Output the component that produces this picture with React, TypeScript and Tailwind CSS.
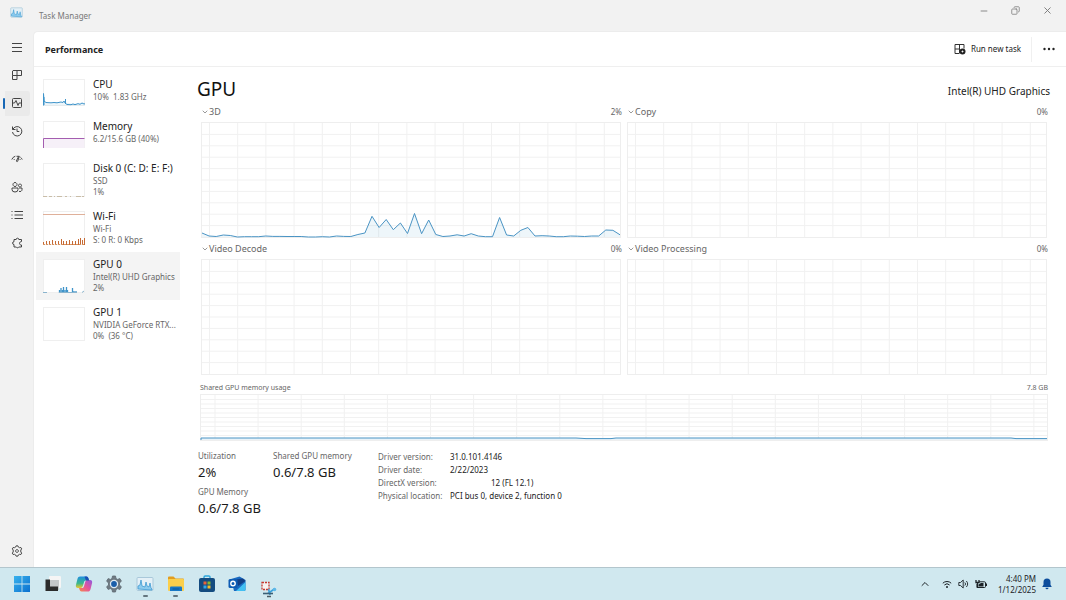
import React from "react";
import { ChevronDown, ChevronUp, Copy, Minus, X } from "lucide-react";

/* ---------- data ---------- */

const gpu3d = [
    4, 1, 0.5, 2, 1.5, 0, 0.3, 0.3, 0.3, 1, 0.6, 0.6, 0.5, 0.5, 0.5, 0, 0, 0.3, 0, 1,
    0.6, 0.5, 2.5, 4, 20.7, 9.5, 17.5, 7.3, 14, 3.5, 23.5, 3.3, 17, 2.5, 0.5, 1, 2.2, 1, 3.3, 1,
    0.3, 0.3, 19.5, 2, 1, 6.7, 9.5, 1, 1.3, 1, 0.3, 0.3, 1, 0.8, 0.5, 1, 1, 7, 6.7, 2.2,
];

const panels = [
    { name: "3D", value: "2%", data: gpu3d },
    { name: "Copy", value: "0%" },
    { name: "Video Decode", value: "0%" },
    { name: "Video Processing", value: "0%" },
];

const details = [
    { label: "Driver version:", value: "31.0.101.4146" },
    { label: "Driver date:", value: "2/22/2023" },
    { label: "DirectX version:", value: "12 (FL 12.1)", indent: true },
    { label: "Physical location:", value: "PCI bus 0, device 2, function 0" },
];

/* ---------- charts ---------- */

type GridProps = { w: number; h: number; step: number; offset: number; children?: React.ReactNode; className: string };

const GridChart = ({ w, h, step, offset, children, className }: GridProps) => {
    const cols: number[] = [];
    for (let x = offset; x < w; x += step) cols.push(x);
    const rows = [1, 2, 3, 4, 5, 6, 7, 8, 9].map((n) => (n * h) / 10);

    return (
        <div className={`border border-[#eeeeee] ${className}`}>
            <svg className="block h-full w-full overflow-visible" viewBox={`0 0 ${w} ${h}`} preserveAspectRatio="none" aria-hidden="true">
                <g stroke="#f1f1f1" strokeWidth="1">
                    {cols.map((x) => <line key={x} x1={x} x2={x} y1="0" y2={h} vectorEffect="non-scaling-stroke" />)}
                    {rows.map((y) => <line key={y} x1="0" x2={w} y1={y} y2={y} vectorEffect="non-scaling-stroke" />)}
                </g>
                {children}
            </svg>
        </div>
    );
};

const Panel = ({ name, value, data }: { name: string; value: string; data?: number[] }) => {
    const points = data?.map((v, i) => `${((i * 418) / 59).toFixed(1)},${(114 - v).toFixed(1)}`).join(" ");

    return (
        <section>
            <div className="flex h-[20px] items-center justify-between">
                <button className="flex items-center text-[9px] text-[#666]">
                    <ChevronDown size={8} />
                    {name}
                </button>
                <span className="-mr-px text-[8px] text-[#666]">{value}</span>
            </div>
            <GridChart w={418} h={114} step={28.2} offset={7.5} className="h-[116px]">
                {points && (
                    <>
                        <polygon points={`0,114 ${points} 418,114`} fill="#117dbb" fillOpacity="0.07" />
                        <polyline points={points} fill="none" stroke="#4a94c4" vectorEffect="non-scaling-stroke" />
                    </>
                )}
            </GridChart>
        </section>
    );
};

/* ---------- resource list ---------- */

const CpuThumb = () => (
    <>
        <path d="M.5 14.500V23l4 .5 6 0 6-.5 4 0 2 .5 6 1 5-.5 8-.5V26.500H.5Z" fill="#117dbb" fillOpacity=".08" />
        <path d="M.5 26.500V14.500l.5 7.500 2 1.500 5 .3 3-.3 3 .3 4-.8 2 .5 1-1.500 1 2 2 1.500 4 .2 2-.7 2 .7 3-1 2 .6 2-1.300 2 1 2-.5" fill="none" stroke="#3f94ca" />
        <path d="M22.500 20v5M1 18v8" stroke="#3f94ca" />
    </>
);

const MemThumb = () => (
    <>
        <path d="M.5 17.500h41V27H.5Z" fill="#f6f0f8" />
        <path d="M.5 27v-9.500h41" fill="none" stroke="#a45db0" />
    </>
);

const DiskThumb = () => (
    <path d="M0 33.500h4m2 0h3m2 0h1m2 0h5m3 0h2m3 0h1m5 0h5m1 0h2" stroke="#c9bda8" strokeWidth="1" fill="none" />
);

const WifiThumb = () => (
    <>
        <path d="M0 3.500h42" stroke="#dfb09a" />
        <path
            d="M.5 34v-3M3.500 34v-4M6.500 34v-4M9.500 34v-5M12.500 34v-4M15.500 34v-4M18.500 34v-6M20.500 34v-4M23.500 34v-4M26.500 34v-5M29.500 34v-4M32.500 34v-4M35.500 34v-6M37.500 34v-7M39.500 34v-5M41.500 34v-7"
            stroke="#c66a35"
        />
        <path d="M0 33.500h42" stroke="#d9935f" strokeDasharray="2 1" />
    </>
);

const GpuThumb = () => (
    <>
        <path d="M16.500 34v-3M18 34v-5M19.500 34v-3M20.500 34v-6M22 34v-3M23.500 34v-6M24.500 34v-3M29.500 34v-5M31 34v-2M33 34v-2" stroke="#3f94ca" strokeWidth="1.300" />
        <path d="M16 33.500h18M0 33.500h4m35 0 2-1.500" stroke="#8ab4cd" fill="none" />
    </>
);

const resources = [
    { name: "CPU", lines: ["10%  1.83 GHz"], thumb: <CpuThumb /> },
    { name: "Memory", lines: ["6.2/15.6 GB (40%)"], thumb: <MemThumb /> },
    { name: "Disk 0 (C: D: E: F:)", lines: ["SSD", "1%"], thumb: <DiskThumb /> },
    { name: "Wi-Fi", lines: ["Wi-Fi", "S: 0 R: 0 Kbps"], thumb: <WifiThumb /> },
    { name: "GPU 0", lines: ["Intel(R) UHD Graphics", "2%"], thumb: <GpuThumb />, active: true },
    { name: "GPU 1", lines: ["NVIDIA GeForce RTX...", "0%  (36 °C)"], thumb: null },
];

const ResourceList = () => (
    <div className="flex w-[146px] shrink-0 flex-col pt-[5px] pl-[2px]">
        {resources.map((r) => {
            const h = r.lines.length > 1 ? 34 : 27;
            return (
                <button
                    key={r.name}
                    className={`flex gap-[8px] pl-[7px] text-left ${r.lines.length > 1 ? "h-[48px]" : "h-[42px]"} ${r.active ? "bg-[#f4f4f4]" : ""}`}
                >
                    <svg width="42" height={h} viewBox={`0 0 42 ${h}`} className="mt-[7px] shrink-0" aria-hidden="true">
                        <rect x=".5" y=".5" width="41" height={h - 1} fill="#fff" stroke="#efefef" />
                        {r.thumb}
                    </svg>
                    <span className="min-w-0 pt-[5px]">
                        <span className="block text-[10px] leading-[14px] whitespace-nowrap text-[#222]">{r.name}</span>
                        {r.lines.map((l) => (
                            <span key={l} className="block text-[8px] leading-[11px] whitespace-pre text-[#666]">{l}</span>
                        ))}
                    </span>
                </button>
            );
        })}
    </div>
);

/* ---------- left rail ---------- */

const navItems = [
    { label: "Open navigation", d: "M1 2.500h10M1 6.500h10M1 10.500h10" },
    { label: "Processes", d: "M2 1.500h8.500v5H1.500V2ZM6 1.500v5M1.500 6.500v4H6v-4" },
    { label: "Performance", d: "M2.500 1.500h7a1 1 0 0 1 1 1v7a1 1 0 0 1-1 1h-7a1 1 0 0 1-1-1v-7a1 1 0 0 1 1-1ZM2 6h1.500l1.500-2.500 2 5L8 6h2", active: true },
    { label: "App history", d: "M1.500 1.500v3h3M1.800 4.500A4.700 4.700 0 1 1 1.500 7M6 3.500v3h2.300" },
    { label: "Startup apps", d: "M.8 6.500a5.500 5.500 0 0 1 3.500-3.300M11.200 6.500a5.500 5.500 0 0 0-1.800-2.300M5.500 3.300h2.800L6.700 8.300a.7.7 0 0 1-1.300-.4L7.600 3.500M2.800 7l.7-.9M8.700 6l.7.900" },
    { label: "Users", d: "M4 1.500a2 2 0 1 0 .01 0M9 3a1.500 1.500 0 1 0 .01 0M1 7h6v1.500a3 2.500 0 0 1-6 0ZM8 7h3v1.500a2 2 0 0 1-3 1.800" },
    { label: "Details", d: "M3.500 2.500H12M3.500 6H12M3.500 9.500H12M.5 2.500h1M.5 6h1M.5 9.500h1" },
    { label: "Services", d: "M10.500 4.500V2.500H7.800a1.300 1.300 0 0 0-2.600 0H3v2.200a1.400 1.400 0 0 0 0 2.800v2.500h2.300a1.300 1.300 0 0 0 2.400 0h2.800V8H9.800a1.700 1.700 0 0 1 0-3.300Z" },
];

const RailIcon = ({ d }: { d: string }) => (
    <svg width="12" height="12" viewBox="0 0 12 12" fill="none" stroke="#444" strokeWidth="1" strokeLinejoin="round" aria-hidden="true">
        <path d={d} />
    </svg>
);

const Rail = () => (
    <nav className="flex w-[33px] shrink-0 flex-col pt-[2px] pb-[2px]">
        {navItems.map((item) => (
            <div key={item.label} className="flex h-[28px] items-center">
                <span className={`ml-[3px] h-[11px] w-[2px] rounded ${item.active ? "bg-[#1767b5]" : ""}`} />
                <button
                    aria-label={item.label}
                    className={`flex h-[25px] w-[25px] items-center justify-center rounded-r-[3px] pr-px ${item.active ? "bg-[#eaeaea]" : ""}`}
                >
                    <RailIcon d={item.d} />
                </button>
            </div>
        ))}
        <button aria-label="Settings" className="mt-auto flex h-[28px] items-center justify-center">
            <RailIcon d="M4.700 2 5.200.8h1.600L7.300 2l1.200.7 1.400-.2.8 1.400-.9 1.100v2l.9 1.100-.8 1.400-1.400-.2-1.200.7-.5 1.200H5.200L4.700 10l-1.200-.7-1.400.2-.8-1.400.9-1.100V5l-.9-1.100.8-1.400 1.400.2ZM6 4.600a1.400 1.400 0 1 0 .01 0" />
        </button>
    </nav>
);

/* ---------- task bar ---------- */

const MonitorIcon = ({ size = 18 }: { size?: number }) => (
    <svg width={size} height={size} viewBox="0 0 18 18" aria-hidden="true">
        <rect x="1" y="2.500" width="16" height="13" rx="1" fill="#e4f0f7" stroke="#a9c8da" />
        <path d="M2 14V11l2-1 1-5 1 6 3 1 1-5 1 4 2 1 1-4 1 5 1 1v1Z" fill="#8ccbee" stroke="#3f9bd2" strokeWidth=".8" />
    </svg>
);

const Windows = () => (
    <svg width="18" height="18" viewBox="0 0 18 18" aria-hidden="true">
        <defs>
            <linearGradient id="win" x1="0" y1="0" x2="1" y2="1">
                <stop offset="0" stopColor="#38b2ed" />
                <stop offset="1" stopColor="#0b70cf" />
            </linearGradient>
        </defs>
        <path d="M1 1h7.600v7.600H1ZM9.400 1H17v7.600H9.400ZM1 9.400h7.600V17H1ZM9.400 9.400H17V17H9.400Z" fill="url(#win)" />
    </svg>
);

const TaskView = () => (
    <svg width="18" height="18" viewBox="0 0 18 18" aria-hidden="true">
        <rect x="5" y="1" width="12" height="12" rx="1" fill="#f5f5f5" />
        <rect x="6" y="5" width="9" height="10" fill="#c4c7c9" />
        <path d="M1.500 4.500H6v7h8V16H1.500Z" fill="#2b2b2b" />
    </svg>
);

const Copilot = () => (
    <svg width="18" height="18" viewBox="0 0 18 18" aria-hidden="true">
        <defs>
            <linearGradient id="cp1" x1="0" y1="0" x2="0" y2="1">
                <stop offset="0" stopColor="#1f8fe0" />
                <stop offset=".6" stopColor="#3cb88a" />
                <stop offset="1" stopColor="#f1c52c" />
            </linearGradient>
            <linearGradient id="cp2" x1="1" y1="0" x2="0" y2="1">
                <stop offset="0" stopColor="#8d5be0" />
                <stop offset=".5" stopColor="#e5549b" />
                <stop offset="1" stopColor="#f58a4c" />
            </linearGradient>
        </defs>
        <path d="M5 1.500h6.500c1 0 1.600.8 2 2l.6 2H11c-1.300 0-1.700.8-2 1.800L7.800 11c-.4 1.300-1 2-2.300 2H3C1 13 .5 11.500 1 9.800l1.500-6C3 2.200 3.700 1.500 5 1.500Z" fill="url(#cp1)" />
        <path d="M13 16.500H6.500c-1 0-1.600-.8-2-2L4 13h3c1.300 0 1.700-.8 2-1.800L10.200 7c.4-1.300 1-2 2.300-2H15c2 0 2.500 1.500 2 3.200l-1.500 6c-.5 1.600-1.200 2.300-2.500 2.300Z" fill="url(#cp2)" />
        <path d="M9.500 1.500h2c1 0 1.600.8 2 2l.6 2H11Z" fill="#1b4fb5" />
    </svg>
);

const Gear = () => (
    <svg width="18" height="18" viewBox="0 0 18 18" aria-hidden="true">
        <path
            d="M7 3.500 7.500 1h3l.5 2.500 1.500.9 2.400-.8 1.500 2.600-1.900 1.700v2.200l1.900 1.700-1.500 2.600-2.400-.8-1.500.9-.5 2.500h-3L7 14.500l-1.500-.9-2.400.8-1.500-2.600 1.900-1.700V7.900L1.600 6.200l1.500-2.600 2.400.8Z"
            fill="#6f7a82"
            stroke="#5e6a72"
            strokeWidth=".8"
            strokeLinejoin="round"
        />
        <circle cx="9" cy="9" r="4.200" fill="#dfeaf2" />
        <circle cx="9" cy="9" r="2.900" fill="#1b5ea9" />
    </svg>
);

const Explorer = () => (
    <svg width="18" height="18" viewBox="0 0 18 18" aria-hidden="true">
        <path d="M1 2.500A1 1 0 0 1 2 1.500h4.500l2 2H16a1 1 0 0 1 1 1V7H1Z" fill="#e29d1e" />
        <rect x="1" y="4" width="16" height="12" rx="1" fill="#fbcf4b" />
        <path d="M3 12.500a1 1 0 0 1 1-1h10a1 1 0 0 1 1 1V16H3Z" fill="#1878c6" />
        <path d="M5.500 14h7" stroke="#0d5693" />
    </svg>
);

const Store = () => (
    <svg width="18" height="18" viewBox="0 0 18 18" aria-hidden="true">
        <path d="M6 4V2.200A1.200 1.200 0 0 1 7.200 1h3.600A1.200 1.200 0 0 1 12 2.200V4" fill="none" stroke="#2aa5dd" strokeWidth="1.400" />
        <rect x="1" y="3" width="16" height="14" rx="2" fill="#144c80" />
        <path d="M5.500 6.500h3v3h-3Z" fill="#e8623a" />
        <path d="M9.500 6.500h3v3h-3Z" fill="#86b932" />
        <path d="M5.500 10.500h3v3h-3Z" fill="#32a6e6" />
        <path d="M9.500 10.500h3v3h-3Z" fill="#f5bd28" />
    </svg>
);

const Outlook = () => (
    <svg width="18" height="18" viewBox="0 0 18 18" aria-hidden="true">
        <path d="m3 4 8.500-2.500L17.500 5v9.500A1.500 1.500 0 0 1 16 16H6Z" fill="#1969c0" />
        <path d="m8 4.500 7-1 2.500 2.500-7.500 5Z" fill="#123f86" />
        <path d="M17.500 7 8 16h8a1.500 1.500 0 0 0 1.500-1.500Z" fill="#43c0f2" />
        <rect x=".5" y="4" width="9" height="9" rx="1.500" fill="#0e5cb4" />
        <circle cx="5" cy="8.500" r="2.200" fill="none" stroke="#fff" strokeWidth="1.400" />
    </svg>
);

const Snip = () => (
    <svg width="18" height="18" viewBox="0 0 18 18" className="mt-[11px]" aria-hidden="true">
        <rect x="3" y="1.500" width="7" height="7" fill="#f6f2f1" stroke="#c6392f" strokeWidth="1.300" strokeDasharray="2 1" />
        <path d="m9 12.500 7-5M9.500 8l1.500 6" stroke="#3aa0da" strokeWidth="1.600" />
        <circle cx="15.500" cy="8.500" r="1.800" fill="#5db8e8" />
        <path d="M4 12.500h10" stroke="#3b5f75" strokeWidth="1.600" />
        <path d="M8 15.500h4" stroke="#4b5b63" strokeWidth="1.500" />
    </svg>
);

const apps = [
    { label: "Start", icon: <Windows /> },
    { label: "Task view", icon: <TaskView /> },
    { label: "Copilot", icon: <Copilot /> },
    { label: "Settings app", icon: <Gear /> },
    { label: "Task Manager", icon: <MonitorIcon />, running: true },
    { label: "File Explorer", icon: <Explorer />, running: true },
    { label: "Microsoft Store", icon: <Store /> },
    { label: "Outlook", icon: <Outlook /> },
    { label: "Snipping Tool", icon: <Snip /> },
];

const Taskbar = () => (
    <footer className="flex h-[33px] shrink-0 items-stretch justify-between border-t border-[#b3c6cd] bg-[#d0e8ef] pl-[7px] text-[#1c2327]">
        <div className="flex w-[276px] justify-between">
            {apps.map((app) => (
                <button key={app.label} aria-label={app.label} className="relative flex w-[30px] items-center justify-center">
                    {app.icon}
                    {app.running && <span className="absolute bottom-[3px] h-[2px] w-[5px] rounded bg-[#65767f]" />}
                </button>
            ))}
        </div>
        <div className="flex items-center pr-[14px]">
            <button aria-label="Hidden icons" className="mr-[11px]"><ChevronUp size={12} /></button>
            <button aria-label="Network, sound and battery" className="flex items-center gap-[6px]">
                <svg width="10" height="10" viewBox="0 0 10 10" fill="none" stroke="currentColor" aria-hidden="true">
                    <path d="M.8 4.200a6 6 0 0 1 8.400 0M2.400 6a3.700 3.700 0 0 1 5.200 0" />
                    <circle cx="5" cy="8" r="1" fill="currentColor" stroke="none" />
                </svg>
                <svg width="11" height="10" viewBox="0 0 11 10" fill="none" stroke="currentColor" strokeWidth=".9" aria-hidden="true">
                    <path d="M.8 3.500h1.700L5.200 1v8L2.500 6.500H.8ZM6.800 3.500a2 2 0 0 1 0 3M8.300 2a4 4 0 0 1 0 6" />
                </svg>
                <svg width="12" height="10" viewBox="0 0 12 10" aria-hidden="true">
                    <path d="M4 2.800h5.500a1 1 0 0 1 1 1v3.700a1 1 0 0 1-1 1H2V5" fill="none" stroke="currentColor" />
                    <path d="M3.500 7.500V5.500L6 4h2.500v3.500Z" fill="currentColor" />
                    <path d="M11.500 4.500v2.500" stroke="currentColor" />
                    <path d="M1 1v2.500h3V1M2.500 3.500V9" stroke="currentColor" strokeWidth="1.300" fill="none" />
                </svg>
            </button>
            <button className="ml-[11px] text-right text-[8px] leading-[11px]">
                4:40 PM<br />1/12/2025
            </button>
            <button aria-label="Notifications" className="ml-[6px] text-[#0c4d9c]">
                <svg width="10" height="12" viewBox="0 0 10 12" fill="currentColor" aria-hidden="true">
                    <path d="M5 .5a3.500 3.500 0 0 1 3.500 3.500v2.800L9.800 9H.2l1.300-2.200V4A3.500 3.500 0 0 1 5 .5ZM3.500 9.700h3a1.500 1.500 0 0 1-3 0Z" />
                </svg>
            </button>
        </div>
    </footer>
);

/* ---------- page ---------- */

const Stat = ({ label, value }: { label: string; value: string }) => (
    <div className="h-[36px] whitespace-nowrap">
        <p className="text-[8px] leading-[14px] text-[#666]">{label}</p>
        <p className="text-[13px] leading-[18px] text-[#1a1a1a]">{value}</p>
    </div>
);

const GpuView = () => (
    <main className="min-w-0 flex-1 pr-[18px] pl-[17px]">
        <div className="flex h-[35px] items-center justify-between pt-[8px]">
            <h1 className="text-[19px] leading-[26px] text-[#111]">GPU</h1>
            <p className="-mr-[2px] pt-[5px] text-[10px] leading-[16px] text-[#222]">Intel(R) UHD Graphics</p>
        </div>
        <div className="grid grid-cols-2 gap-x-[6px] gap-y-px pr-px pl-[4px]">
            {panels.map((p) => <Panel key={p.name} {...p} />)}
        </div>
        <div className="mt-[7px] flex h-[12px] items-center justify-between pl-[3px] text-[7px] text-[#666]">
            <span>Shared GPU memory usage</span>
            <span>7.8 GB</span>
        </div>
        <GridChart w={846} h={45} step={43.1} offset={14} className="ml-[3px] h-[47px]">
            <path d="M0 43h846v2H0Z" fill="#e9f3f9" />
            <path d="M0 45v-2h375l10 .6h25l5-.6h395l5 .6h31" fill="none" stroke="#4a94c4" vectorEffect="non-scaling-stroke" />
        </GridChart>
        <div className="mt-[8px] flex pl-px">
            <div className="w-[75px]">
                <Stat label="Utilization" value="2%" />
                <Stat label="GPU Memory" value="0.6/7.8 GB" />
            </div>
            <div className="w-[105px]">
                <Stat label="Shared GPU memory" value="0.6/7.8 GB" />
            </div>
            <table className="mt-px self-start text-left text-[8px]">
                <tbody>
                    {details.map((d) => (
                        <tr key={d.label} className="h-[13px] leading-[13px] whitespace-nowrap">
                            <th scope="row" className="w-[72px] p-0 font-normal text-[#666]">{d.label}</th>
                            <td className={`py-0 text-[#222] ${d.indent ? "pl-[41px]" : "pl-0"}`}>{d.value}</td>
                        </tr>
                    ))}
                </tbody>
            </table>
        </div>
    </main>
);

const App = () => {
    return (
        <div className="flex h-screen flex-col overflow-hidden bg-[#f2f2f2] font-['Noto_Sans','Open_Sans',sans-serif]">
            <header className="flex h-[31px] shrink-0 items-start justify-between text-[#777]">
                <div className="flex pl-[10px]">
                    <span className="mt-[6px]"><MonitorIcon size={13} /></span>
                    <span className="mt-[10px] ml-[16px] text-[8px] leading-[12px]">Task Manager</span>
                </div>
                <div className="flex gap-[22px] pt-[5px] pr-[13px]">
                    <button aria-label="Minimize"><Minus size={10} /></button>
                    <button aria-label="Restore"><Copy size={9} className="-scale-x-100" /></button>
                    <button aria-label="Close"><X size={11} /></button>
                </div>
            </header>
            <div className="flex min-h-0 flex-1">
                <Rail />
                <div className="flex min-w-0 flex-1 flex-col rounded-tl-[5px] border-t border-l border-[#ececec] bg-white">
                    <div className="flex h-[35px] shrink-0 items-center justify-between border-b border-[#efefef] pr-[11px] pl-[11px]">
                        <h2 className="pt-px text-[9px] font-bold text-[#222]">Performance</h2>
                        <div className="flex h-full items-center">
                            <button className="flex items-center gap-[5px] pr-[10px] text-[8px] text-[#222]">
                                <svg width="12" height="12" viewBox="0 0 12 12" fill="none" stroke="#333" aria-hidden="true">
                                    <path d="M1 1.500h9v4M1 1.500v9h4M1 6h5M5.500 1.500v9" />
                                    <circle cx="8.500" cy="8.500" r="3" fill="#222" stroke="none" />
                                    <path d="M7.500 8.500h2M8.500 7.500v2" stroke="#fff" strokeWidth=".8" />
                                </svg>
                                Run new task
                            </button>
                            <button aria-label="More options" className="flex h-[25px] items-center border-l border-[#f0f0f0] pl-[11px]">
                                <svg width="12" height="4" viewBox="0 0 12 4" fill="#222" aria-hidden="true">
                                    <circle cx="1.500" cy="2" r="1.200" />
                                    <circle cx="6" cy="2" r="1.200" />
                                    <circle cx="10.500" cy="2" r="1.200" />
                                </svg>
                            </button>
                        </div>
                    </div>
                    <div className="flex min-h-0 flex-1">
                        <ResourceList />
                        <GpuView />
                    </div>
                </div>
            </div>
            <Taskbar />
        </div>
    );
};

export default App;
